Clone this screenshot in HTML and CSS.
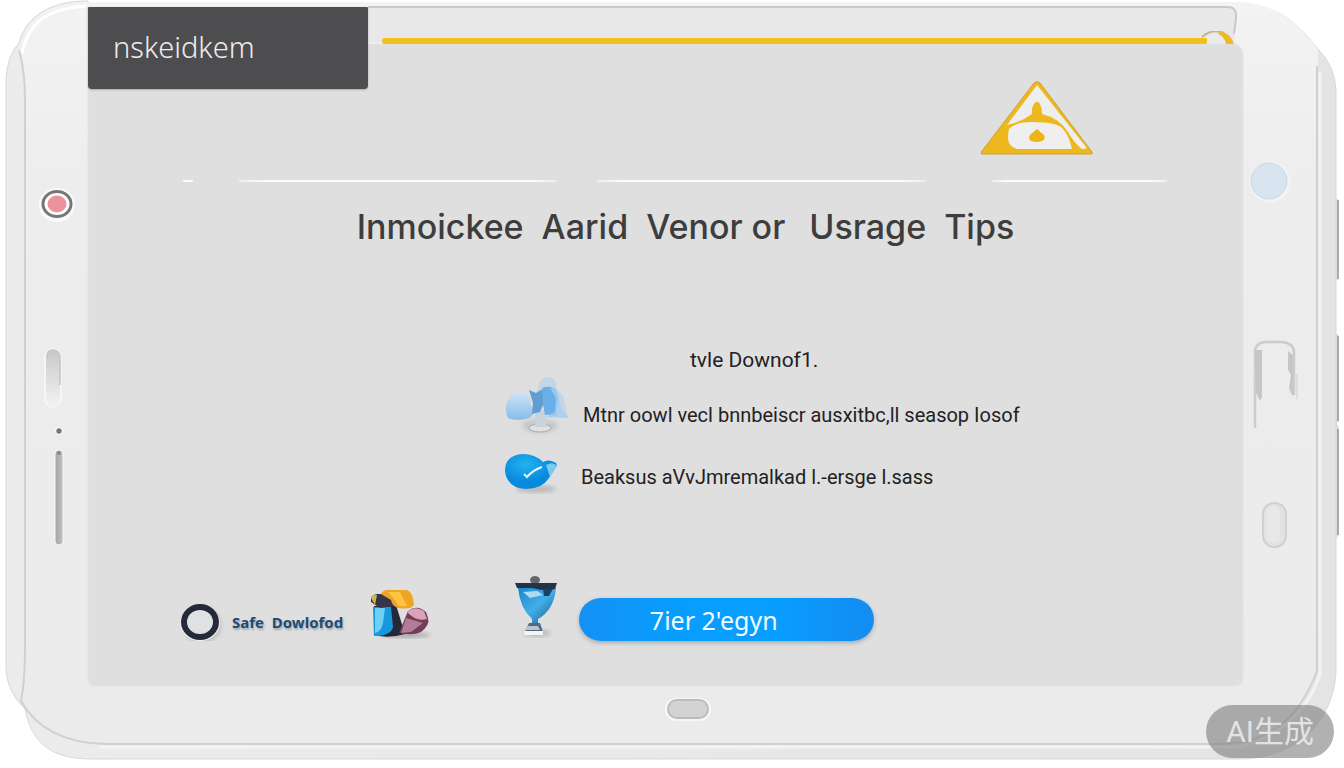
FILE: index.html
```html
<!DOCTYPE html>
<html lang="en">
<head>
<meta charset="utf-8">
<title>Usrage Tips</title>
<link rel="stylesheet" href="styles.css">
</head>
<body>
<div class="device">
  <svg class="device-art" viewBox="0 0 1344 768" preserveAspectRatio="none" aria-hidden="true">
    <defs>
      <linearGradient id="shell" x1="0" x2="0" y1="0" y2="1"><stop offset="0" stop-color="#f3f3f3"/><stop offset=".25" stop-color="#ededed"/><stop offset="1" stop-color="#ebebeb"/></linearGradient>
      <linearGradient id="edge" x1="0" x2="1"><stop offset="0" stop-color="#ececec"/><stop offset="1" stop-color="#e4e4e4"/></linearGradient>
      <linearGradient id="slot" x1="0" x2="0" y1="0" y2="1"><stop offset="0" stop-color="#c8c8c8"/><stop offset="1" stop-color="#f3f3f3"/></linearGradient>
      <linearGradient id="rod" x1="0" x2="1"><stop offset="0" stop-color="#a4a4a4"/><stop offset="1" stop-color="#c2c2c2"/></linearGradient>
    </defs>
    <path d="M1333 199h4q2 0 2 3v75q0 3-2 3h-4zM1333 334h4q2 0 2 3v84l-2 3 2 4v104q0 4-2 5h-4z" fill="#ddd"/>
    <path d="M1338 200v79M1338 336v85M1338 429v106" stroke="#aaa" stroke-width="2"/>
    <path d="M88 6H1238C1278 3 1299 25 1318 49Q1335 66 1336 90V668C1336 717 1299 759 1239 759H92C52 759 32 744 25 709Q6 690 6 668V80Q7 56 19 43C25 19 47 1 88 1Z" fill="url(#edge)" stroke="#d8d8d8" stroke-width="1"/>
    <path d="M88 2H1240C1278 4 1299 25 1318 49V668C1300 720 1270 744 1230 744H105C58 743 34 724 21 701Q25 685 25 660V100Q24 70 19 50C27 18 47 2 88 2Z" fill="url(#shell)"/>
    <path d="M19 50Q25 70 25 100V650Q25 680 21 701C34 724 58 743 105 744H1220C1275 744 1300 714 1317 671V66" fill="none" stroke="#d0d0d0" stroke-width="2"/>
    <path d="M1320 72V674Q1303 728 1240 747H100" fill="none" stroke="#f3f3f3" stroke-width="3"/>
    <path d="M22 53C29 23 45 9 86 6" fill="none" stroke="#fff" stroke-width="3"/>
    <path d="M86 7H1231Q1240 8 1236 24L1234 42H86Z" fill="#e8e8e8"/>
    <path d="M368 7H1228Q1237 7 1236 18L1234 34" fill="none" stroke="#c9c9c9" stroke-width="2"/>
    <path d="M88 44H1235Q1243 46 1243 56V678Q1243 686 1234 686H96Q88 686 88 678Z" fill="#dfdfdf" stroke="#e3e3e3"/>
    <g><ellipse cx="57" cy="205" rx="18" ry="17" fill="#fafafa"/><ellipse cx="57" cy="204" rx="14" ry="12.500" fill="#fff" stroke="#777" stroke-width="3"/><ellipse cx="57" cy="204" rx="9.500" ry="8.500" fill="#ed929b"/></g>
    <rect x="45" y="349" width="16" height="58" rx="8" fill="url(#slot)" stroke="#f5f5f5" stroke-width="2"/>
    <path d="M47 357Q47 350 53 350T60 357V385" fill="none" stroke="#c4c4c4" stroke-width="1.500"/>
    <ellipse cx="59" cy="431" rx="4.500" ry="4" fill="#f8f8f8"/><circle cx="59" cy="431" r="2.700" fill="#777"/>
    <rect x="55" y="450" width="8" height="95" rx="4" fill="url(#rod)" stroke="#f7f7f7"/><circle cx="59" cy="453" r="2" fill="#888"/>
    <circle cx="1270" cy="182" r="20.500" fill="#f3f3f3"/><circle cx="1269" cy="181" r="18" fill="#d8e4f0" stroke="#cbd7e3"/>
    <path d="M1255 428V350Q1257 342 1266 342H1282Q1294 343 1294 353V395" fill="none" stroke="#ccc" stroke-width="2.500"/>
    <path d="M1255 350h7v47l-2 4-4-8zM1288 351l5 4v42l-4-9 2-13-3-5z" fill="#c6c6c6"/><path d="M1297 374v25" stroke="#ddd" stroke-width="2"/>
    <rect x="1263" y="503" width="23" height="44" rx="11" fill="#e2e2e2" stroke="#d0d0d0" stroke-width="2"/>
    <rect x="1266" y="506" width="14" height="37" rx="7" fill="#e8e8e8"/>
    <rect x="665" y="698" width="46" height="23" rx="11" fill="#f6f6f6"/><rect x="668" y="700" width="40" height="18" rx="9" fill="#d3d3d3" stroke="#bcbcbc" stroke-width="2"/>
  </svg>

  <main class="screen">
    <header class="topbar">
      <div class="brand">nskeidkem</div>
      <div class="accent">
        <span class="accent-line"></span>
        <svg class="accent-cap" width="35" height="16" viewBox="0 0 35 16" aria-hidden="true"><path d="M7 6Q14 1 22 4L27 13H7Z" fill="#ebebeb"/><path d="M2 6Q12-3 24 2" fill="none" stroke="#c2b490" stroke-width="2"/><path d="M20 1Q30 1 34 13H26Q25 6 18 3Z" fill="#efb729"/></svg>
      </div>
    </header>

    <div class="alert-row">
      <svg class="alert" width="114" height="76" viewBox="0 0 114 76" role="img" aria-label="Warning">
        <path d="M54 2Q57-1 60 2L112 71Q113 73 111 73H2Q0 73 2 70Z" fill="#edb81e" stroke="#cda13d"/>
        <path d="M57 4L106 66Q107 68 104 68H102Q94 62 88 51Q79 37 62 33Q62 27 60 23Q57 18 54 23Q51 27 52 33Q41 41 27 44Z" fill="#eee"/>
        <path d="M29 48Q35 41 52 41Q76 41 82 47Q89 54 92 68H37Q28 65 28 57Q28 52 29 48Z" fill="#efefef"/>
        <path d="M57 48Q60 51 64 54Q66 58 62 60Q57 62 51 60Q47 57 51 53Z" fill="#edb414"/>
      </svg>
    </div>
    <div class="rule"><i></i><b></b><i></i><b></b><i></i><b></b><i></i></div>

    <h1 class="title"><span>Inmoickee</span><span>Aarid</span><span>Venor or</span><span>Usrage</span><span>Tips</span></h1>

    <section class="tips">
      <p class="lead">tvle Downof1.</p>
      <ul class="tip-list">
        <li class="tip">
          <svg class="tip-icon" width="66" height="60" viewBox="0 0 66 60" aria-hidden="true">
            <defs><linearGradient id="petal" x2="0" y2="1"><stop stop-color="#d3e5f4"/><stop offset="1" stop-color="#87bdea"/></linearGradient><filter id="soft"><feGaussianBlur stdDeviation="2"/></filter></defs>
            <ellipse cx="36" cy="50" rx="18" ry="7" fill="#c8c8c8" filter="url(#soft)"/>
            <ellipse cx="36" cy="52" rx="11" ry="4" fill="#e1e1e1" stroke="#aaa"/>
            <path d="M32 34H43L42 51H31Z" fill="#cad2da"/>
            <path d="M34 12Q35 1 46 1Q53 3 52 12L59 20L64 42L46 42 32 19Z" fill="#c2d6e8"/>
            <path d="M4 42Q0 35 3 26Q8 14 17 15L26 20Q25 27 29 33Q31 39 25 42Q14 46 4 42Z" fill="url(#petal)"/>
            <path d="M25 14L32 17 39 13 39 29 36 36 28 38 29 27Z" fill="#5f9dd3"/><path d="M38 12Q45 9 51 13Q55 25 53 38L41 39 39 28Z" fill="#6aafe8"/>
            <path d="M46 12L52 22 51 36 42 41 55 40Q57 25 52 13Z" fill="#98caf0"/><path d="M54 26L59 35 65 42 52 41Z" fill="#add0ed"/>
          </svg>
          <span>Mtnr oowl vecl bnnbeiscr ausxitbc,ll seasop Iosof</span>
        </li>
        <li class="tip tip-second">
          <svg class="tip-icon" width="66" height="44" viewBox="0 0 66 44" aria-hidden="true">
            <defs><radialGradient id="bulb" cx=".4" cy=".3"><stop stop-color="#24b4ed"/><stop offset="1" stop-color="#0789de"/></radialGradient></defs>
            <ellipse cx="32" cy="35" rx="20" ry="4" fill="#bbb" filter="url(#soft)"/>
            <path d="M1 17Q1 1 19 0Q31 0 39 8Q44 5 50 8Q54 9 52 13L45 24Q38 35 22 35Q3 34 1 17Z" fill="url(#bulb)"/>
            <path d="M42 11Q49 7 53 12L46 23Z" fill="#7ac9ee"/><path d="M20 20L23 23Q29 16 38 13" fill="none" stroke="#e4f9ff" stroke-width="2"/>
          </svg>
          <span>Beaksus aVvJmremalkad l.-ersge l.sass</span>
        </li>
      </ul>
    </section>

    <footer class="actions">
      <svg class="ring" width="44" height="38" viewBox="0 0 44 38" aria-hidden="true"><ellipse cx="22" cy="22" rx="19" ry="18" fill="#bbb" filter="url(#soft)"/><ellipse cx="20" cy="20" rx="20" ry="18" fill="#f0f0f0"/><ellipse cx="20" cy="19" rx="16" ry="15" fill="#dfe1e2" stroke="#252a3b" stroke-width="6"/></svg>
      <span class="safe">Safe&nbsp; Dowlofod</span>
      <svg class="blocks" width="64" height="52" viewBox="0 0 64 52" aria-hidden="true">
        <ellipse cx="34" cy="46" rx="25" ry="3" fill="#aaa" filter="url(#soft)"/>
        <path d="M3 17L25 16 34 45Q17 50 4 46Z" fill="#27273a"/><path d="M2 18H20L22 38Q20 47 3 47Z" fill="#1599dc"/><path d="M4 19H14L12 34Q10 43 4 44Z" fill="#6dd0f6"/>
        <path d="M37 22Q46 15 55 23L57 29Q59 36 50 43Q42 47 28 44Z" fill="#713d58"/><path d="M36 23Q44 16 53 22L56 30Q45 33 36 23Z" fill="#dca0b7"/><path d="M35 29L52 34 40 43 30 44Z" fill="#b47c94"/>
        <path d="M0 13Q-2 7 5 5H15Q23 8 24 17L9 19Z" fill="#353449"/><path d="M0 9Q2 4 6 6L4 16Z" fill="#c6b84c"/>
        <path d="M10 5Q13 0 20 1H36Q42 3 43 16Q40 21 27 19Q21 17 20 11Z" fill="#efa523"/><path d="M17 3H29L36 17H28L23 10Z" fill="#ffc443"/>
      </svg>
      <svg class="cup" width="44" height="65" viewBox="0 0 44 65" aria-hidden="true">
        <defs><linearGradient id="cupfill" x2="1" y2="1"><stop stop-color="#1688cb"/><stop offset=".5" stop-color="#43aee9"/><stop offset="1" stop-color="#165787"/></linearGradient></defs>
        <ellipse cx="22" cy="57" rx="14" ry="4" fill="#bbb" filter="url(#soft)"/><ellipse cx="20" cy="4" rx="5" ry="4" fill="#64666a"/>
        <path d="M3 12H41Q39 34 23 43V48H17V43Q5 32 3 12Z" fill="url(#cupfill)"/><path d="M0 7H42L40 13 26 14 17 12 2 12Z" fill="#243349"/><path d="M8 16L22 15 28 19 15 22Z" fill="#b0daf1"/><path d="M28 13L38 13 34 20H29Z" fill="#164468"/>
        <path d="M14 47H25L28 56H10Z" fill="#526780"/><path d="M13 50H23L25 54H10Z" fill="#b9c5cf"/><path d="M9 55H28V59H9Z" fill="#f3f4f6"/>
      </svg>
      <button class="cta" type="button">7ier 2'egyn</button>
    </footer>
  </main>
  <div class="badge">AI生成</div>
</div>
</body>
</html>
```
FILE: styles.css
```css
* { box-sizing: border-box; }
body { margin: 0; background: #fff; font-family: Roboto, "Noto Sans", sans-serif; color: #222; }
.device { position: relative; min-height: 100vh; padding: 7px 101px 82px 88px; }
.device-art { position: absolute; inset: 0; width: 100%; height: 100%; }
.screen { position: relative; display: flex; flex-direction: column; }

.topbar { display: flex; gap: 14px; height: 82px; }
.brand { width: 280px; padding: 20px 25px; background: #4d4c4f; color: #ededed; border-radius: 1px 1px 4px 4px; font: 300 29px/40px "Noto Sans", "Open Sans", sans-serif; box-shadow: 0 1px 2px #aaa; }
.accent { flex: 1; display: flex; align-items: flex-start; padding: 24px 8px 0 0; }
.accent-line { flex: 1; height: 6px; margin-top: 7px; border-radius: 3px; background: #efc11c; }
.accent-cap { flex: none; margin-left: -8px; }

.alert-row { display: flex; justify-content: flex-end; padding-right: 149px; margin-top: -8px; }
.alert { display: block; }
.rule { display: grid; grid-template-columns: 10fr 46fr 317fr 41fr 329fr 66fr 175fr; margin: 23px 76px 0 95px; }
.rule i { height: 2px; background: linear-gradient(90deg, #eee, #fff 10%, #fff 90%, #eee); }

.title { display: flex; justify-content: center; gap: 18px; margin: 20px 0 0; padding-left: 40px; color: #3d3d3d; font: 500 34px/50px Inter, "Open Sans", sans-serif; white-space: nowrap; }
.title span:nth-child(3) { margin-right: 6px; }

.tips { margin-top: 92px; }
.lead { margin: 0 0 0 602px; font-size: 21px; line-height: 32px; }
.tip-list { list-style: none; margin: 0; padding: 0 0 0 416px; }
.tip { display: flex; align-items: flex-end; gap: 13px; height: 60px; font-size: 20px; line-height: 42px; white-space: nowrap; }
.tip-icon { flex: none; }
.tip-second { margin-top: 2px; gap: 11px; }

.actions { display: flex; align-items: flex-end; height: 67px; margin-top: 76px; padding-left: 92px; }
.safe { margin-left: 8px; color: #1e4b72; font: 700 15px/38px "Noto Sans", "Open Sans", sans-serif; text-shadow: 1px 2px 2px #9baab7; white-space: nowrap; }
.blocks { margin-left: 28px; }
.cup { margin-left: 80px; }
.cta { width: 295px; height: 43px; margin-left: 20px; padding: 0 26px 0 0; border: 0; border-radius: 22px; background: linear-gradient(90deg, #1491f3, #079eff 35%, #079eff 65%, #148cf0); color: #f2fbff; font: 400 25px/40px "Noto Sans", "Open Sans", sans-serif; box-shadow: 0 2px 4px #aaa; }

.badge { position: absolute; right: 10px; bottom: 10px; padding: 0 20px; border-radius: 27px; background: rgba(125, 125, 125, .6); color: #e3e3e3; font: 400 30px/53px Roboto, "Noto Sans CJK SC", sans-serif; }
```
